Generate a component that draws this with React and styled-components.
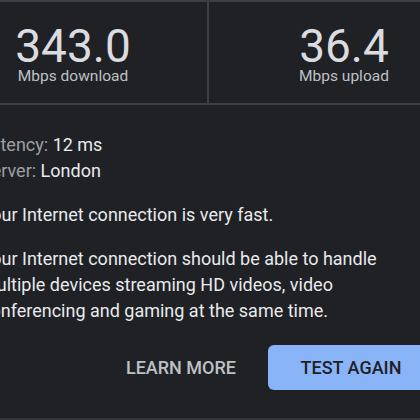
import React from "react";
import styled, { createGlobalStyle } from "styled-components";

const Global = createGlobalStyle`
  html, body { margin: 0; padding: 0; background: #202124; overflow: hidden; }
  body { font-family: Roboto, "Noto Sans", Arial, sans-serif; }
`;

const Viewport = styled.div`
  width: 420px;
  height: 420px;
  overflow: hidden;
  background: #202124;
`;

const Card = styled.div`
  width: 540px;
  height: 420px;
  box-sizing: border-box;
  margin-left: -61px;
  border-top: 2px solid #3c4043;
  border-bottom: 2px solid #35363a;
  display: flex;
  flex-direction: column;
`;

const Stats = styled.div`
  display: grid;
  grid-template-columns: 270px 1fr;
  border-bottom: 2px solid #3c4043;
`;

const Stat = styled.div`
  display: flex;
  flex-direction: column;
  align-items: center;
  padding: 21px 0 20px;
  border-right: ${(p) => (p.$divider ? "2px solid #3c4043" : "none")};
`;

const Value = styled.div`
  font-size: 46px;
  line-height: 46px;
  color: #dadce0;
  font-weight: 400;
`;

const Unit = styled.div`
  font-size: 15.5px;
  line-height: 14px;
  color: #bdc1c6;
`;

const Body = styled.div`
  padding: 27px 0 0 42px;
  color: #e8eaed;
  font-size: 18px;
  line-height: 26px;
`;

const Meta = styled.div``;

const Label = styled.span`
  color: #9aa0a6;
`;

const Para = styled.p`
  margin: 18px 0 0;
`;

const Actions = styled.div`
  display: flex;
  justify-content: flex-end;
  align-items: center;
  gap: 32px;
  padding: 21px 45px 0 0;
`;

const TextButton = styled.button`
  background: none;
  border: none;
  padding: 0;
  font-family: inherit;
  font-size: 18px;
  font-weight: 500;
  color: #bdc1c6;
  text-transform: uppercase;
`;

const FilledButton = styled.button`
  background: #8ab4f8;
  border: none;
  border-radius: 6px;
  height: 45px;
  width: 166px;
  font-family: inherit;
  font-size: 18px;
  font-weight: 500;
  color: #202124;
  text-transform: uppercase;
`;

export default function App() {
  return (
    <Viewport>
      <Global />
      <Card>
        <Stats>
          <Stat $divider>
            <Value>343.0</Value>
            <Unit>Mbps download</Unit>
          </Stat>
          <Stat>
            <Value>36.4</Value>
            <Unit>Mbps upload</Unit>
          </Stat>
        </Stats>
        <Body>
          <Meta>
            <Label>Latency:</Label> 12 ms
          </Meta>
          <Meta>
            <Label>Server:</Label> London
          </Meta>
          <Para>Your Internet connection is very fast.</Para>
          <Para>
            Your Internet connection should be able to handle
            <br />
            multiple devices streaming HD videos, video
            <br />
            conferencing and gaming at the same time.
          </Para>
        </Body>
        <Actions>
          <TextButton>Learn more</TextButton>
          <FilledButton>Test again</FilledButton>
        </Actions>
      </Card>
    </Viewport>
  );
}
